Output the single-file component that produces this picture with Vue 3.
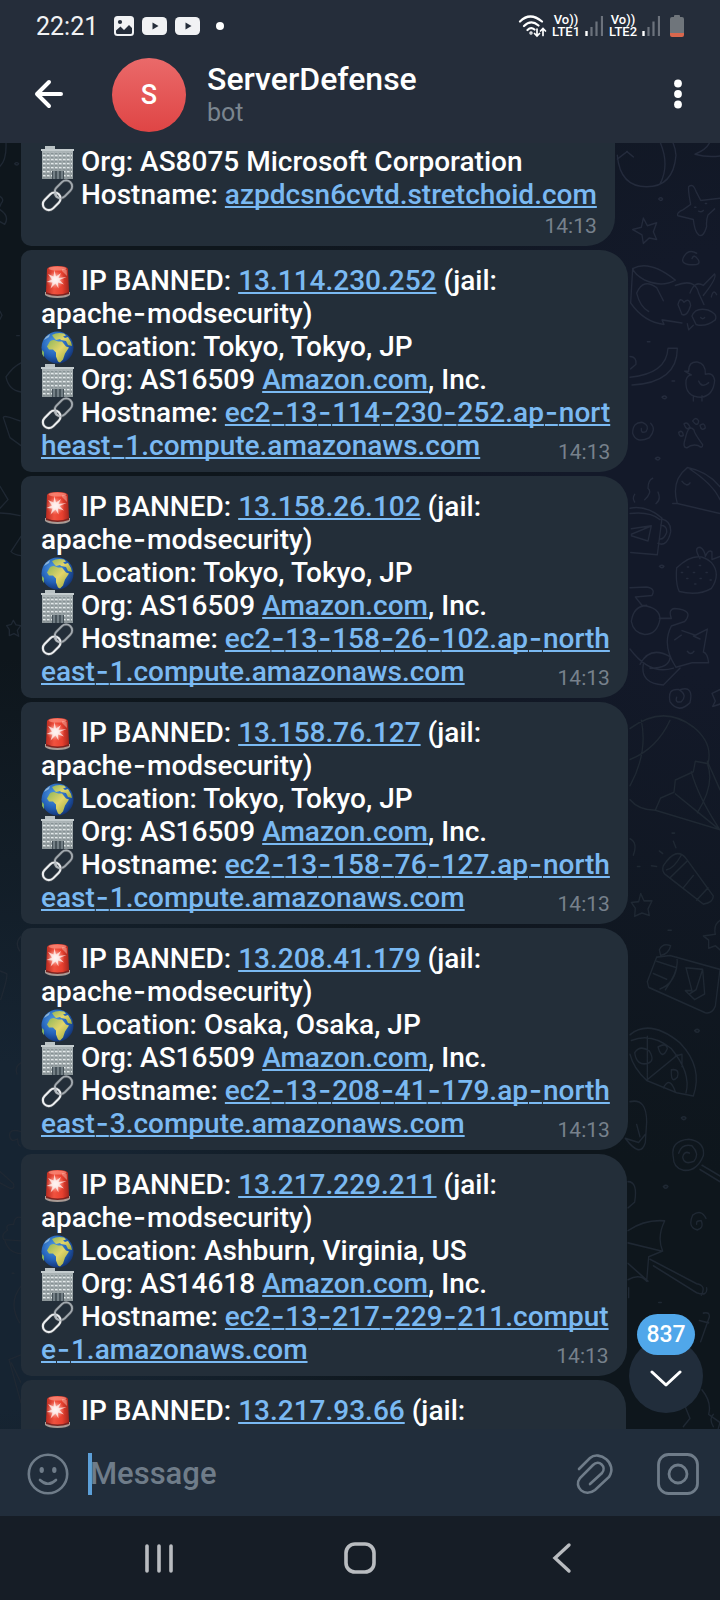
<script setup>
import { h } from 'vue'

const link = 'ec2-13-'
const messages = [
  { ip: '13.114.230.252', place: 'Tokyo, Tokyo, JP', org: 'AS16509', host: [link + '114-230-252.ap-nort', 'heast-1.compute.amazonaws.com'] },
  { ip: '13.158.26.102', place: 'Tokyo, Tokyo, JP', org: 'AS16509', host: [link + '158-26-102.ap-north', 'east-1.compute.amazonaws.com'] },
  { ip: '13.158.76.127', place: 'Tokyo, Tokyo, JP', org: 'AS16509', host: [link + '158-76-127.ap-north', 'east-1.compute.amazonaws.com'] },
  { ip: '13.208.41.179', place: 'Osaka, Osaka, JP', org: 'AS16509', host: [link + '208-41-179.ap-north', 'east-3.compute.amazonaws.com'] },
  { ip: '13.217.229.211', place: 'Ashburn, Virginia, US', org: 'AS14618', host: [link + '217-229-211.comput', 'e-1.amazonaws.com'] },
]

const Icon = (props) => h('svg', { class: 'emoji', viewBox: '0 0 33 33', 'aria-hidden': 'true' }, [h('use', { href: '#' + props.name })])
Icon.props = ['name']

// Wraps each hyphen so that it can be set in a face with a wider one.
const Hy = (props) => props.t.split(/(-)/).map((s) => (s === '-' ? h('span', { class: 'wide-hyphen' }, '-') : s))
Hy.props = ['t']
</script>

<template>
  <div class="phone">
    <svg class="defs" width="0" height="0" aria-hidden="true">
      <defs>
        <linearGradient id="gRed" x1="0" x2="1"><stop offset="0" stop-color="#b92a20" /><stop offset=".35" stop-color="#f0523f" /><stop offset=".7" stop-color="#e8402f" /><stop offset="1" stop-color="#a3251d" /></linearGradient>
        <radialGradient id="gGlow"><stop offset="0" stop-color="#fff" /><stop offset=".35" stop-color="#ffe6e0" stop-opacity=".9" /><stop offset="1" stop-color="#ff8a78" stop-opacity="0" /></radialGradient>
        <radialGradient id="gSea" cx=".4" cy=".35" r=".7"><stop offset="0" stop-color="#4f9be6" /><stop offset=".6" stop-color="#2361b8" /><stop offset="1" stop-color="#12306f" /></radialGradient>
        <linearGradient id="gLand" x1="0" x2="1" y2="1"><stop offset="0" stop-color="#8fb65a" /><stop offset=".5" stop-color="#e3d56a" /><stop offset="1" stop-color="#9aa83e" /></linearGradient>
        <linearGradient id="gWall" x2="0" y2="1"><stop offset="0" stop-color="#a9b3b5" /><stop offset="1" stop-color="#8d979a" /></linearGradient>
        <pattern id="pWin" width="4" height="4" patternUnits="userSpaceOnUse" x="2" y="5"><rect width="2.5" height="2.6" fill="#e3e9ea" /><rect y="1.6" width="2.5" height="1" fill="#5d686e" /></pattern>
        <g id="siren">
          <path d="M4 27h25v3q-3 3-12.500 3T4 30z" fill="#a99b95" />
          <path d="M5 26q11.500 5 23 0v3q-11.500 4-23 0z" fill="#7b2320" />
          <path d="M5 27 6 4Q7 1 16.500 1T27 4l1 23q-11.500 5-23 0z" fill="url(#gRed)" />
          <ellipse cx="16.500" cy="3.500" rx="9" ry="2" fill="#ff9d8c" opacity=".6" />
          <circle cx="14.500" cy="15" r="9" fill="url(#gGlow)" opacity=".8" />
          <path d="m13.500 5 1.500 6.500 5-3.500-2.500 5 8-1-7 3 4.500 4.500-6-2 .5 6-3-5-5 5 2-6-6-.5 5.500-2.500-4-5.500 5.500 2.500z" fill="#fff" opacity=".7" />
          <path d="m21 6 5 5-.4-6q-2-1.500-4.600-1z" fill="#ffb3a6" opacity=".5" />
        </g>
        <g id="globe">
          <circle cx="16.500" cy="16.500" r="16" fill="url(#gSea)" />
          <path d="M11 4q5-3 12-1.500l2 2-3 1 2 1.500 3-1 3 5 1 4-4-1-2-4-5-1-1-1-4 1-2-2z" fill="url(#gLand)" />
          <path d="M8 12q1-3 5-3l4 1.500 4 0 4 5 3 1-4 6-2 6-3 3-2-1-2-5 0-4-3-3-4 0-2-3z" fill="url(#gLand)" />
          <path d="m1 19 2 2 0 5-2-3z" fill="#7fae63" />
          <path d="M3 9q2-4 6-6l-1 3z" fill="#8db5d8" />
        </g>
        <g id="office">
          <path d="M4 0h10v3H4z" fill="#b9c2c4" />
          <path d="M0 3h33v2H0z" fill="#c4ccce" />
          <path d="M1 5h31v28H1z" fill="url(#gWall)" />
          <path d="M2 6h29v20H2z" fill="url(#pWin)" />
          <path d="M2 26h9v6H2zM23 26h8v6h-8z" fill="url(#pWin)" />
          <path d="M11 25h12v8H11z" fill="#47535a" />
          <path d="M13 25v8M17 25v8M21 25v8" stroke="#9fabb0" stroke-width="1" />
        </g>
        <g id="chain" fill="none">
          <rect x="-10" y="-6" width="20" height="12" rx="6" transform="translate(22.300 10.300) rotate(-45)" stroke="#4a5157" stroke-width="3" />
          <rect x="-10" y="-6" width="20" height="12" rx="6" transform="translate(22.300 10.300) rotate(-45)" stroke="#a3aab0" stroke-width="1.800" />
          <rect x="-10" y="-6" width="20" height="12" rx="6" transform="translate(10.700 22.300) rotate(-45)" stroke="#4a5157" stroke-width="3.200" />
          <rect x="-10" y="-6" width="20" height="12" rx="6" transform="translate(10.700 22.300) rotate(-45)" stroke="#eceef0" stroke-width="2.100" />
          <path d="m14 12 1.500 5.500 3.500 2" stroke="#b5bbc0" stroke-width="2" stroke-linecap="round" />
        </g>
      </defs>
    </svg>

    <header class="top">
      <div class="status">
        <div class="group">
          <span class="clock">22:21</span>
          <svg width="20" height="20" viewBox="0 0 20 20"><rect width="20" height="20" rx="3.500" fill="#f1f2f4" /><circle cx="6" cy="6" r="2.100" fill="#252d3a" /><path d="M2 14.500 6.500 10.500l3.500 3.500 5-5 3 3v4.500q0 1.500-1.500 1.500h-13Q2 18 2 16.500z" fill="#252d3a" /></svg>
          <svg v-for="n in 2" :key="n" class="tube" width="25" height="18" viewBox="0 0 25 18"><rect width="25" height="18" rx="4.500" fill="#f1f2f4" /><path d="M10.500 5.500v7l6-3.500z" fill="#252d3a" /></svg>
          <span class="bullet"></span>
        </div>
        <div class="group">
          <svg width="30" height="24" viewBox="0 0 30 24" fill="none" stroke="#fff" stroke-width="2.200" stroke-linecap="round"><path d="M2 7.500q10-10 22 0M6 12q7-7 14.500-.5M9.500 16q3.500-3.300 7-.5" /><circle cx="13" cy="19" r=".6" /><path d="M19 15v6.500m-2.500-2 2.500 2.500 2.500-2.500M25 21.500V15m-2.500 2 2.500-2.500 2.500 2.500" stroke-width="1.700" /></svg>
          <template v-for="n in 2" :key="n">
            <span class="lte"><span>Vo))</span><span>LTE{{ n }}</span></span>
            <svg class="bars" width="18" height="20" viewBox="0 0 18 20"><path d="M1.500 15v5" stroke="#fff" stroke-width="2.400" /><path d="M6.500 11v9M11.500 5.500V20M17 0v20" stroke="#6c727c" stroke-width="2.200" /></svg>
          </template>
          <svg class="battery" width="14" height="22" viewBox="0 0 14 22"><path d="M4 2V1q0-1 1-1h4q1 0 1 1v1h2q2 0 2 2v14H0V4q0-2 2-2z" fill="#6f757b" /><path d="M0 18h14v2q0 2-2 2H2q-2 0-2-2z" fill="#d9674d" /></svg>
        </div>
      </div>
      <div class="bar">
        <button class="back" aria-label="Back"><svg width="30" height="30" viewBox="0 0 30 30" fill="none" stroke="#fff" stroke-width="4" stroke-linecap="round" stroke-linejoin="round"><path d="M27 15H3M15 3 3 15l12 12" /></svg></button>
        <div class="avatar">S</div>
        <div class="who"><h1>ServerDefense</h1><p>bot</p></div>
        <button class="more" aria-label="More"><svg width="8" height="30" viewBox="0 0 8 30" fill="#fff"><circle cx="4" cy="4.500" r="3.900" /><circle cx="4" cy="15" r="3.900" /><circle cx="4" cy="25.500" r="3.900" /></svg></button>
      </div>
    </header>

    <main class="chat">
      <svg class="doodles" width="120" height="1286" viewBox="0 0 120 1286" aria-hidden="true">
        <g transform="translate(0 -3) scale(.3333 .3827)">
          <path d="M52 40Q60 122 140 122T228 40Q226 20 218 5M180 5q30 60 0 110M52 50l30-20M80 30l20 14M330 5q-10 20-45 32 40 10 80 4" />
          <path d="M266 122q14-10 22 12l14 24 58-6M344 180l-20 16q-6 14-4 30-10 30-24 22-12-8-16-40l-46-10q-6-8 16-16l22-14q-8-36-6-46M284 176h4M316 166h4M296 186q8 4 14-2M130 204l12 20 28-8-10 24 10 20-22-4-18 14-4-22-28-14 26-6zM290 296q-24-12-38 8t20 22 22-14-18-2" />
          <path d="M98 336q50-24 128 30-40 20-92 0-30-14-36-30zl-6 90q40 50 100 56l-6-12 60 8M110 400q20-40 60-14l20 34M110 400q10 36 36 48M226 380q60-20 70 20l16 30M270 400q14-34 40-20l34-30q8 10-34 56M234 430q6-22 18-6 16-14 20 8-10 30-26 24zM276 460q10-24 48-16 30 10 22 26-30 20-58 12zM334 410q6-22 16-6M262 480l4 16 14-12M302 464q6 6 12 0" />
          <path d="M90 620q110-10 114-76h28q0 90-136 96M90 566q20 0 18 20l-16 12M266 604q0-26 26-24 26 4 24 32 24-6 28 16-4 40-40 44-50 0-46-44 4-14 16-14l-20-10zM280 670v12M306 668v14M296 630q10 20 30 4M152 740q18 16-4 38-40 16-50-12 0-30 30-28 22 8 10 24-16 6-14-8" />
          <path d="M256 780q10-40 26-22 0 8 26 38 0 12-14 2-20-4-32 6-16 2-6-24zM236 764q12-8 14 8-12 6-14-8zM252 742q10-8 18 8-10 12-18-8zM278 734q10-12 18 0-2 18-18 0zM300 746q14-10 16 6-12 10-16-6z" />
          <path d="M90 962q50-8 96 26l-14 96-80-6M90 976q60-6 90 16M184 990q30 6 28 34-10 40-38 30M182 1006q20 2 18 20-10 20-22 16M94 1016l60-8-10 40-50-14M94 1030l56-20M104 946q-8-10 0-20M134 940q24-20 10-30 0-20 14-26M168 950q16-10 6-30M218 950h14q-20-60 30-94 60 10 98 50M232 950l128 26M270 860q70 40 90 80M246 892q14 16 24 4" />
          <path d="M230 1118q60-50 104-14 30 30 0 68-40 20-96 8-12-20-8-62zM300 1094q-20-30 0-30 14 6 16 24 10-20 20-12v20l24-8M244 1130h4M262 1116h4M260 1146h4M280 1130h4M298 1112h4M300 1146h4M318 1130h4M284 1160h4M330 1150h4" />
          <path d="M90 1170l50-2q28 4 16 22l-50 4 20 22q54 6 54 36-8 40-46 40-34-4-40-34 6-40 46-42M178 1250l36 0q-10-24 10-26 60 4 30 34l-40 12q-30 50 14 108l48-12 50 0q-4-26-16-28 6-30 12-60l-36 16-40-12M90 1330q60 70 130 50M120 1370q30-50 90-20 0 30-60 30M130 1370q-10 50 60 54l50-44M224 1306l20-12M280 1296l20 8M262 1336q10 12 20 0M242 1436q40-10 28 34-34 30-60-2-8-36 26-32 28 14 8 32-20 4-14-12M360 1436l-24 10 10 20-8 14 22-6" />
          <path d="M176 154q6-6 12 0-4 8-12 0zM142 527h8M216 630h8M186 672q8-6 14 0-6 8-14 0zM166 832q8-6 14 0-6 8-14 0zM178 1114q8-6 14 0-6 8-14 0z" />
        </g>
        <g transform="translate(0 557) scale(.3333 .4082)" class="dim">
          <path d="M90 70q100-60 190-4 60 40 44 90l-38-6-6 26-54 20-4 30-40 14-16 30q-50 0-76-26M124 50q20 80-34 160M210 50q-40 70-120 96M166 270l194 48M322 150l38 70M322 156q24 50-30 120M274 176q20 60 84 140M226 230q60 40 130 86M90 340q24 10 10 40" />
          <path d="M190 406q40-50 70-16l80 90q0 16-30 20L200 430q-16-8-10-24zM200 416q20-2 44-36M212 434l50-40M250 460l30-30M290 490l34-30M220 346l8 16M178 370l10 6M154 406l16 2M122 474l10 18 24 0-12 20 4 16-22-6-22 8 2-20-12-14 22-2zM360 540q-20 10-14 34l-36 4 16 10 0 20 20-6 14 10M178 612q10-18 34-10-6 20-30 24z" />
          <path d="m170 630 40-4 150 34-14 90q-10 20-30 16l-170-62-4-14zM170 640l60 16q-10 40-50 52M230 630q10 30-34 80M160 670l40 14M258 656l50 4-20 50-20 10M308 660l6 60-30 14-28-22 20 0-18-56" />
          <path d="M90 820q60-40 150 20 70 60 40 130l-50-8-90-30q-40-30-50-64M94 834q60-20 120 20 60 60 44 108M142 824v106l90-60M104 864q16-20 44-4 18 24-4 30-34 8-40-26zM174 850q26-12 28 4-16 30-28-4zM214 906q26-4 18 18-20 18-18-18zM226 872l20-4 0 30M190 950q20-30 36 10" />
          <path d="M90 984q50-10 50 50l-4 50q-14 40-60-10l40 10 20-20M110 1040l10 30M220 1120q-10-40 46-44 50 6 44 40-20 40-60 36-30-6-30-32zM236 1110q10-24 40-18 24 20 6 38-30 10-34-10 4-16 20-10M306 1140l54 26M300 1150l60 30M84 1180q30 0 20 50l-20 14M318 1270q-14-24-40-8-16 30 14 36 20-4 12-22-16-2-14 8" />
          <path d="M84 1300q50-28 110-24-24 40-6 74l-42 14-6 60q-20-20-56-4M84 1330l100 20M84 1380l60 44M150 1370l140 60q30 4 14 28M160 1386l130 66q34 10 30-12M86 1440l0 24M310 1502q20-4 18 10l-26 60M298 1520l28 6M204 564h10M284 810q8-6 14 0-6 8-14 0zM244 1024q8-6 14 0-6 8-14 0zM190 1192q8-6 14 0-6 8-14 0zM176 1476h8M216 326h8M112 408h8" />
          <path d="M306 1690q30 30 20 60l34 20-14 40-20-20M250 1720l20 40-20 20M340 1780q-14-20 0-30" />
        </g>
      </svg>
      <svg class="doodles left" width="21" height="1286" viewBox="0 0 21 1286" aria-hidden="true">
        <g transform="scale(.3333)" class="dim">
          <path d="M0 70q20-20 18-70M44 62q6-6 12 0-4 8-12 0zM0 160q14 10 4 20l-4 10M0 200q30 20 14 44l-14-8M0 505l6 12-6 12M50 578h8M63 660Q40 670 18 702q8 40 45 45M10 824q0-10 50 10M10 824l20 60 33 24M0 1030l24 40-24 26M0 1110q30 0 60 8M63 1180l-30 46q10 10 30 12M40 1432l8 14 14 2-10 14 4 18-14-8-14 6 0-18-8-12 14-4z" />
          <path d="M63 2380q-20 20-4 44M0 2484l20 8q4 10-18 78M63 2760q-20 10-12 34M63 2966q-36-10-34 12t24 10q0 30 22 20M0 3086l40 36q6 18-10 14L0 3120M63 3224q-20-6-22 20-28 0-18 18-20 10-12 28l52 4M14 3290q10 40 49 42M36 3391h6M63 3430q-40 50-4 110M63 3636l-36 14 36 130M34 3660l29 60" />
        </g>
      </svg>

      <article class="bubble first">
        <p><Icon name="office" /> Org: AS8075 Microsoft Corporation</p>
        <p><Icon name="chain" /> Hostname: <a href="#">azpdcsn6cvtd.stretchoid.com</a></p>
        <time>14:13</time>
      </article>

      <article v-for="m in messages" :key="m.ip" class="bubble">
        <p><Icon name="siren" /> IP BANNED: <a href="#">{{ m.ip }}</a> (jail:<br /><Hy t="apache-modsecurity)" /></p>
        <p><Icon name="globe" /> Location: {{ m.place }}</p>
        <p><Icon name="office" /> Org: {{ m.org }} <a href="#">Amazon.com</a>, Inc.</p>
        <p><Icon name="chain" /> Hostname: <a href="#"><Hy :t="m.host[0]" /><br /><Hy :t="m.host[1]" /></a></p>
        <time>14:13</time>
      </article>

      <article class="bubble last">
        <p><Icon name="siren" /> IP BANNED: <a href="#">13.217.93.66</a> (jail:</p>
      </article>

      <button class="jump" aria-label="Scroll to latest, 837 unread">
        <span class="count">837</span>
        <svg width="32" height="18" viewBox="0 0 32 18" fill="none" stroke="#fff" stroke-width="3" stroke-linecap="round" stroke-linejoin="round"><path d="m2 2 14 13L30 2" /></svg>
      </button>
    </main>

    <form class="composer" @submit.prevent>
      <button type="button" aria-label="Emoji"><svg width="42" height="42" viewBox="0 0 42 42" fill="none" stroke="#6f7c89" stroke-width="2.600" stroke-linecap="round"><circle cx="21" cy="21" r="19.200" /><path d="M13 27q8 7.500 16 0" /><g fill="#6f7c89" stroke="none"><ellipse cx="14.700" cy="17" rx="2.200" ry="3" /><ellipse cx="27.300" cy="17" rx="2.200" ry="3" /></g></svg></button>
      <span class="caret"></span>
      <input type="text" placeholder="Message" aria-label="Message" />
      <button type="button" class="clip" aria-label="Attach"><svg width="38" height="42" viewBox="0 0 38 42" fill="none" stroke="#6f7c89" stroke-width="2.600" stroke-linecap="round"><path d="M3 16 14 5C23-3 42 10 33 24L19 37C9 45-3 34 4 25L17 12c6-6 14 2 9 8L14 31" /></svg></button>
      <button type="button" aria-label="Camera"><svg width="42" height="42" viewBox="0 0 42 42" fill="none" stroke="#6f7c89" stroke-width="2.800"><rect x="1.500" y="1.500" width="39" height="39" rx="10" /><circle cx="21" cy="21" r="9" /></svg></button>
    </form>

    <nav class="keys">
      <button aria-label="Recents"><svg width="30" height="32" viewBox="0 0 30 32" stroke="#b9bcc0" stroke-width="3.600" stroke-linecap="round"><path d="M3 4v25M15 4v25M27 4v25" /></svg></button>
      <button aria-label="Home"><svg width="32" height="32" viewBox="0 0 32 32" fill="none" stroke="#b9bcc0" stroke-width="3.600"><rect x="2" y="2" width="28" height="28" rx="9" /></svg></button>
      <button aria-label="Back"><svg width="32" height="32" viewBox="0 0 32 32" fill="none" stroke="#b9bcc0" stroke-width="3.400" stroke-linecap="round"><path d="M24 3 10 16l14 13" /></svg></button>
    </nav>
  </div>
</template>

<style>
body { margin: 0; background: #161d26; }
.wide-hyphen { padding: 0 1px; font-family: Inter, sans-serif; line-height: 1; }
</style>

<style scoped>
.phone { display: flex; flex-direction: column; height: 100vh; overflow: hidden; font-family: Roboto, "Noto Sans", sans-serif; font-weight: 500; color: #fff; }
.defs { position: absolute; }
button { display: flex; align-items: center; justify-content: center; padding: 0; border: 0; background: none; font: inherit; color: inherit; }
.top { flex: none; height: 143px; background: #252d3a; }
.status { display: flex; justify-content: space-between; height: 52px; padding: 0 36px; }
.group { display: flex; align-items: center; }
.clock { margin-right: 16px; font-size: 25px; font-weight: 400; color: #f1f2f4; }
.tube { margin-left: 8px; }
.bullet { width: 8px; height: 8px; margin-left: 16px; border-radius: 50%; background: #fff; }
.lte { display: flex; flex-direction: column; align-items: center; width: 28px; margin-left: 4px; font-size: 13px; line-height: 12px; }
.bars { margin-left: 5px; }
.bars + .lte { margin-left: 6px; }
.battery { margin-left: 10px; }
.bar { display: flex; align-items: center; height: 84px; padding: 0 38px 2px 34px; }
.avatar { display: flex; align-items: center; justify-content: center; width: 74px; height: 74px; margin: 2px 0 0 48px; border-radius: 50%; background: linear-gradient(#ea6a6a, #df4545); font-size: 27px; }
.who { flex: 1; margin: 2px 0 0 21px; }
h1 { margin: 0; font-size: 32px; line-height: 36px; font-weight: 500; }
.who p { margin: 0; font-size: 25px; line-height: 32px; font-weight: 400; color: #7b858f; }
.chat { position: relative; flex: 1; min-height: 0; display: flex; flex-direction: column; align-items: flex-start; gap: 4px; padding-left: 21px; overflow: hidden; background: radial-gradient(ellipse 70% 55% at 100% 25%, #131929 30%, transparent), radial-gradient(ellipse 60% 45% at 0 85%, #162432 30%, transparent), #0e161c; }
.doodles { position: absolute; top: 0; right: 0; fill: none; stroke: #242b3c; stroke-width: 4; stroke-linecap: round; stroke-linejoin: round; }
.doodles.left { right: auto; left: 0; }
.dim { stroke: #1f2833; }
.bubble { position: relative; flex: none; box-sizing: border-box; padding: 14px 18px 10px 20px; border-radius: 10px 28px 28px 10px; background: #232e39; font-size: 28px; line-height: 33px; white-space: nowrap; }
.bubble p { margin: 0; }
.bubble a { color: #7ab9f2; text-decoration: underline; text-decoration-thickness: 2px; text-underline-offset: 2px; text-decoration-skip-ink: none; }
.bubble time { position: absolute; right: 18px; bottom: 7px; font-size: 21px; line-height: 25px; font-weight: 400; color: #77818c; }
.bubble.first { padding: 2px 18px 35px 20px; border-radius: 0 0 28px 10px; }
.bubble.last { flex: 1 0 0; min-width: 605px; border-radius: 10px 28px 0 0; }
.emoji { width: 33px; height: 33px; margin: -4px 0; vertical-align: -4px; }
.jump { position: absolute; right: 17px; bottom: 16px; width: 74px; height: 74px; border-radius: 50%; background: #212d3b; }
.jump > svg { margin-top: 6px; }
.count { position: absolute; top: -25px; left: 8px; width: 58px; height: 41px; border-radius: 21px; background: #50a7ea; font-size: 23px; line-height: 41px; }
.composer { flex: none; display: flex; align-items: center; height: 87px; padding: 2px 21px 0 27px; box-sizing: border-box; background: #212d3b; }
.caret { width: 4px; height: 42px; margin: 0 -2px 0 19px; background: #5c9fd8; }
input { flex: 1; min-width: 0; padding: 0; border: 0; outline: 0; background: none; color: #fff; font: inherit; font-size: 31px; }
input::placeholder { color: #6f7c89; opacity: 1; }
.clip { margin-right: 43px; }
.keys { flex: none; display: grid; grid-template-columns: repeat(3, 1fr); height: 84px; padding: 0 58px; background: #161d26; }
</style>
